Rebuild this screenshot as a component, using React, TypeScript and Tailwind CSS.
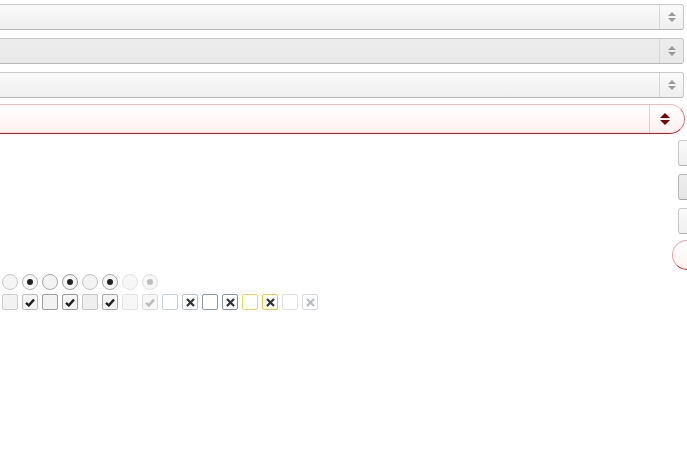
import React from "react";

const Arrows = ({ color = "#9a9a9a", size = 4 }: { color?: string; size?: number }) => (
   <span className="flex flex-col items-center gap-[2px]">
      <span
         className="block w-0 h-0 border-l-transparent border-r-transparent border-t-0"
         style={{ borderLeftWidth: size, borderRightWidth: size, borderBottomWidth: size, borderBottomColor: color, borderStyle: "solid", borderTopColor: "transparent" }}
      />
      <span
         className="block w-0 h-0 border-l-transparent border-r-transparent border-b-0"
         style={{ borderLeftWidth: size, borderRightWidth: size, borderTopWidth: size, borderTopColor: color, borderStyle: "solid", borderBottomColor: "transparent" }}
      />
   </span>
);

const Select = ({ dark }: { dark?: boolean }) => (
   <div
      className={`flex h-[26px] -ml-[20px] mr-[3px] rounded-[3px] border border-[#c9c9c9] border-b-[#b8b8b8] ${
         dark ? "bg-gradient-to-b from-[#ececec] to-[#e9e9e9]" : "bg-gradient-to-b from-[#fafafa] to-[#efefef]"
      }`}
   >
      <div className="flex-1" />
      <div className="w-[24px] border-l border-[#d6d6d6] flex items-center justify-center pl-[1px]">
         <Arrows />
      </div>
   </div>
);

const CheckIcon = ({ color }: { color: string }) => (
   <svg width="10" height="9" viewBox="0 0 10 9">
      <path d="M1 4.8 L3.8 7.4 L9 1.6" fill="none" stroke={color} strokeWidth="2.4" strokeLinejoin="miter" />
   </svg>
);

const XIcon = ({ color }: { color: string }) => (
   <svg width="9" height="9" viewBox="0 0 9 9">
      <path d="M1 1 L8 8 M8 1 L1 8" fill="none" stroke={color} strokeWidth="2.2" />
   </svg>
);

const radios = [
   { on: false, box: "border-[#cacaca] bg-[#f5f5f5]", dot: "" },
   { on: true, box: "border-[#b4b4b4] bg-[#f7f7f7]", dot: "bg-[#222]" },
   { on: false, box: "border-[#a9a9a9] bg-[#f3f3f3]", dot: "" },
   { on: true, box: "border-[#9d9d9d] bg-[#f5f5f5]", dot: "bg-[#222]" },
   { on: false, box: "border-[#c4c4c4] bg-[#f3f3f3]", dot: "" },
   { on: true, box: "border-[#a8a8a8] bg-[#f5f5f5]", dot: "bg-[#222]" },
   { on: false, box: "border-[#e3e3e3] bg-[#f7f7f7]", dot: "" },
   { on: true, box: "border-[#dedede] bg-[#f7f7f7]", dot: "bg-[#bdbdbd]" },
];

const checks = [
   { box: "border-[#cccccc] bg-[#f2f2f2]", mark: null },
   { box: "border-[#bdbdbd] bg-[#f4f4f4]", mark: "c", color: "#222" },
   { box: "border-[#9e9e9e] bg-[#f2f2f2]", mark: null },
   { box: "border-[#9a9a9a] bg-[#f4f4f4]", mark: "c", color: "#222" },
   { box: "border-[#c6c6c6] bg-[#efefef]", mark: null },
   { box: "border-[#a9a9a9] bg-[#f2f2f2]", mark: "c", color: "#222" },
   { box: "border-[#e3e3e3] bg-[#f7f7f7]", mark: null },
   { box: "border-[#dcdcdc] bg-[#f7f7f7]", mark: "c", color: "#bbbbbb" },
   { box: "border-[#cbd1d8] bg-white", mark: null },
   { box: "border-[#b9c0c8] bg-white", mark: "x", color: "#2c3138" },
   { box: "border-[#8e98a3] bg-white", mark: null },
   { box: "border-[#8a949f] bg-white", mark: "x", color: "#2c3138" },
   { box: "border-[#f2d65a] bg-white", mark: null },
   { box: "border-[#ecc93e] bg-white", mark: "x", color: "#2c3138" },
   { box: "border-[#dfe2e6] bg-white", mark: null },
   { box: "border-[#d6d9dd] bg-white", mark: "x", color: "#b8bcc1" },
];

export default function App() {
   return (
      <div className="w-[687px] h-[472px] overflow-hidden bg-white font-['Liberation_Sans',sans-serif]">
         <div className="flex flex-col pt-[4px] gap-[8px]">
            <Select />
            <Select dark />
            <Select />
         </div>
         <div className="flex h-[30px] mt-[6px] -ml-[20px] mr-[2px] rounded-r-[15px] rounded-l-[3px] border border-[#ffb8b8] border-b-[#cc1111] border-r-[#f07070] bg-gradient-to-b from-white to-[#fff0f0]">
            <div className="flex-1" />
            <div className="w-[35px] border-l border-[#f6c8c8] flex items-center justify-center pr-[4px]">
               <Arrows color="#7a0000" size={5} />
            </div>
         </div>
         <div className="flex flex-col gap-[8px] mt-[6px] ml-[678px]">
            <div className="h-[26px] w-[30px] rounded-[3px] border border-[#c9c9c9] border-b-[#b0b0b0] bg-gradient-to-b from-[#fafafa] to-[#efefef]" />
            <div className="h-[26px] w-[30px] rounded-[3px] border border-[#b9b9b9] border-b-[#a5a5a5] bg-gradient-to-b from-[#ededed] to-[#e6e6e6]" />
            <div className="h-[26px] w-[30px] rounded-[3px] border border-[#c9c9c9] border-b-[#b0b0b0] bg-gradient-to-b from-[#fafafa] to-[#efefef]" />
            <div className="h-[30px] w-[40px] -ml-[6px] -mt-[2px] rounded-[15px] border border-[#f3a0a0] border-b-[#d82020] bg-gradient-to-b from-white to-[#fff2f2]" />
         </div>
         <div className="flex gap-[4px] pl-[2px] mt-[4px]">
            {radios.map((r, i) => (
               <div key={i} className={`w-[16px] h-[16px] rounded-full border flex items-center justify-center ${r.box}`}>
                  {r.on && <div className={`w-[6px] h-[6px] rounded-full ${r.dot}`} />}
               </div>
            ))}
         </div>
         <div className="flex gap-[4px] pl-[2px] mt-[4px]">
            {checks.map((c, i) => (
               <div key={i} className={`w-[16px] h-[16px] rounded-[2px] border flex items-center justify-center ${c.box}`}>
                  {c.mark === "c" && <CheckIcon color={c.color!} />}
                  {c.mark === "x" && <XIcon color={c.color!} />}
               </div>
            ))}
         </div>
      </div>
   );
}
